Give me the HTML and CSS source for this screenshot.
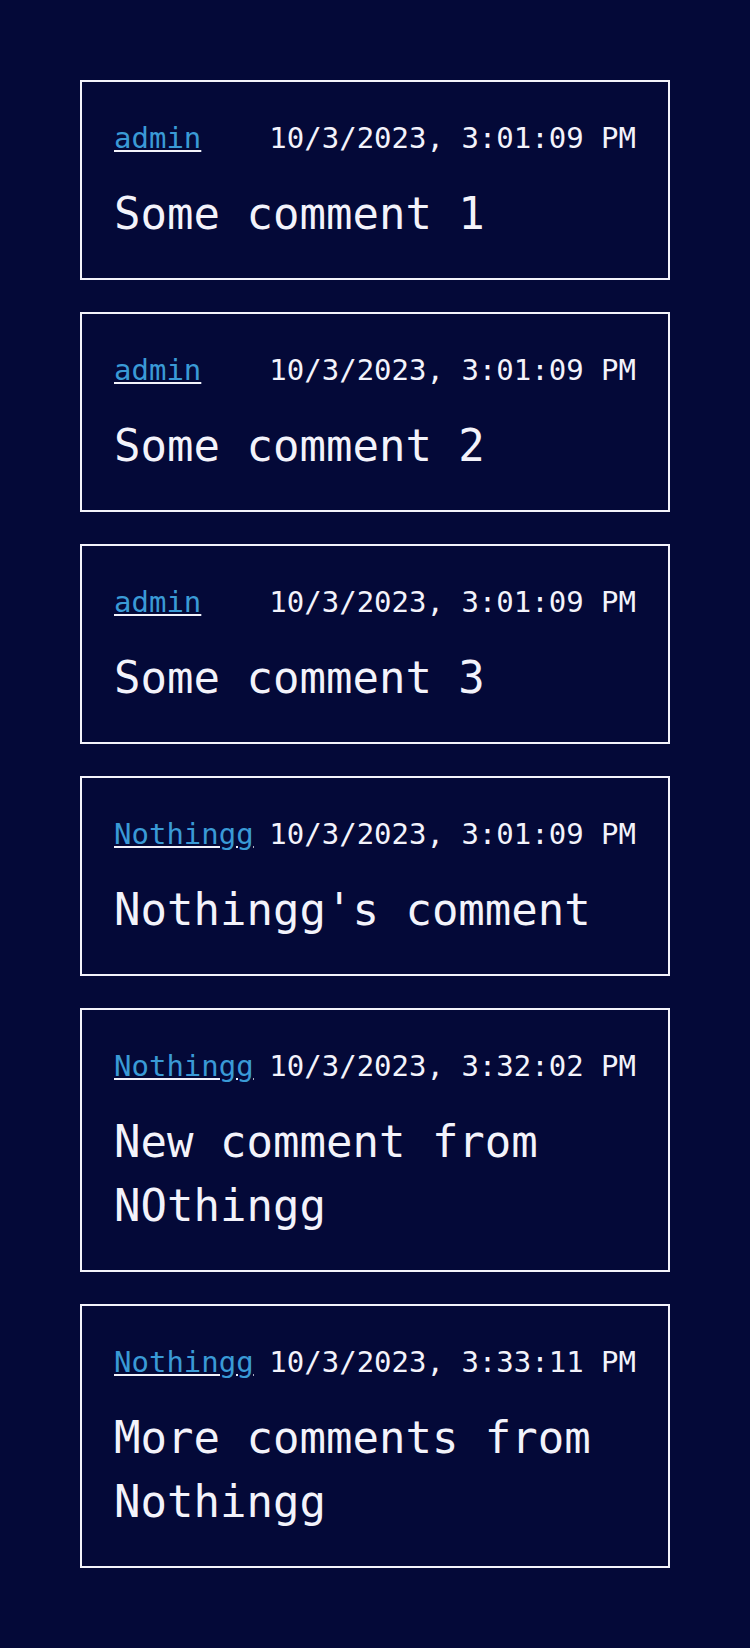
FILE: index.html
```html
<!DOCTYPE html>
<html lang="en">
<head>
<meta charset="utf-8">
<meta name="viewport" content="width=device-width, initial-scale=1">
<title>Comments</title>
<link rel="stylesheet" href="styles.css">
</head>
<body>
<main class="comments">
  <article class="comment">
    <header class="comment-header"><a class="author" href="#">admin</a><time>10/3/2023, 3:01:09 PM</time></header>
    <p class="comment-text">Some comment 1</p>
  </article>
  <article class="comment">
    <header class="comment-header"><a class="author" href="#">admin</a><time>10/3/2023, 3:01:09 PM</time></header>
    <p class="comment-text">Some comment 2</p>
  </article>
  <article class="comment">
    <header class="comment-header"><a class="author" href="#">admin</a><time>10/3/2023, 3:01:09 PM</time></header>
    <p class="comment-text">Some comment 3</p>
  </article>
  <article class="comment">
    <header class="comment-header"><a class="author" href="#">Nothingg</a><time>10/3/2023, 3:01:09 PM</time></header>
    <p class="comment-text">Nothingg's comment</p>
  </article>
  <article class="comment">
    <header class="comment-header"><a class="author" href="#">Nothingg</a><time>10/3/2023, 3:32:02 PM</time></header>
    <p class="comment-text">New comment from NOthingg</p>
  </article>
  <article class="comment">
    <header class="comment-header"><a class="author" href="#">Nothingg</a><time>10/3/2023, 3:33:11 PM</time></header>
    <p class="comment-text">More comments from Nothingg</p>
  </article>
</main>
</body>
</html>
```

FILE: styles.css
```css
* {
  box-sizing: border-box;
}

body {
  margin: 0;
  background: #040938;
  color: #f3f3fb;
  font-family: "DejaVu Sans Mono", monospace;
}

.comments {
  display: flex;
  flex-direction: column;
  gap: 32px;
  padding: 80px;
}

.comment {
  display: flex;
  flex-direction: column;
  gap: 20px;
  padding: 32px;
  border: 2px solid #f3f3fb;
}

.comment-header {
  display: flex;
  justify-content: space-between;
  font-size: 29px;
  line-height: 48px;
}

.author {
  color: #3a9ad6;
  text-decoration: underline 2px #f3f3fb;
  text-underline-offset: 2px;
}

.comment-text {
  margin: 0;
  font-size: 44px;
  line-height: 64px;
}
```
